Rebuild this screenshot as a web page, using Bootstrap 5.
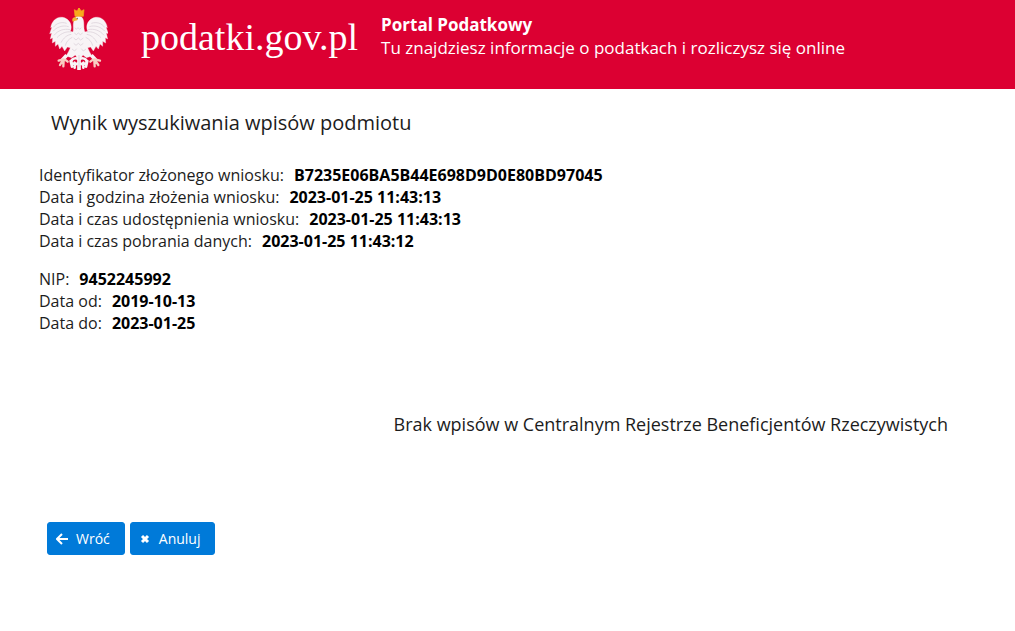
<!DOCTYPE html>
<html lang="pl">
<head>
<meta charset="utf-8">
<meta name="viewport" content="width=device-width, initial-scale=1">
<title>Portal Podatkowy</title>
<link href="https://cdn.jsdelivr.net/npm/bootstrap@5.3.0/dist/css/bootstrap.min.css" rel="stylesheet">
<style>
  body { font-family: "Open Sans", "Noto Sans", sans-serif; color: #1c1c1c; background: #fff; }
  .site-header { background: #dc0032; min-height: 89px; padding: 8px 49px; }
  .site-name { font: 38px/48px "Liberation Serif", serif; margin: 5px 0 0 33px; }
  .site-tagline { font-size: 17px; line-height: 23px; margin: 5px 0 0 23px; }
  .page { padding: 20px 39px; }
  .page-title { font-size: 20px; line-height: 28px; font-weight: 400; margin: 0 12px 27px; }
  .facts { font-size: 16px; line-height: 22px; margin-bottom: 16px; }
  .facts dt { font-weight: 400; }
  .facts dd { font-weight: 700; margin: 0; color: #000; }
  .fact { column-gap: 10px; }
  .empty-note { font-size: 18px; line-height: 26px; margin: 77px 28px 85px; }
  .actions { padding-left: 8px; gap: 5px; }
  .btn-action { --bs-btn-color: #fff; --bs-btn-bg: #007ad9; --bs-btn-border-color: #007ad9;
    --bs-btn-hover-color: #fff; --bs-btn-hover-bg: #116fbf; --bs-btn-hover-border-color: #116fbf;
    --bs-btn-font-size: 14px; --bs-btn-line-height: 21px; --bs-btn-border-radius: 3px;
    --bs-btn-padding-x: 8px; --bs-btn-padding-y: 5px; padding-right: 14px; }
</style>
</head>
<body>
<header class="site-header d-flex align-items-start text-white">
  <svg class="flex-shrink-0" width="59" height="64" viewBox="27 24 177 192" role="img" aria-label="Godło Polski">
    <g fill="#f8f4f6" stroke="#f8f4f6" stroke-linejoin="round">
      <path d="M103 60C97 72 102 86 99 96L91 94C98 80 92 57 68 52C51 49 35 62 32 83L36 81L29 101L35 99L31 117L38 113L37 129L46 124L46 139L54 132L59 147L66 139L74 153L82 141L91 143C88 151 83 160 78 168L95 173L106 165L113 176L117 192L121 176L129 165L139 173L156 168C151 160 146 151 143 143L152 141L160 153L168 139L175 147L180 132L188 139L188 124L197 129L196 113L203 117L199 99L205 101L198 81L202 83C199 62 183 49 166 52C142 57 136 80 143 94L135 96C129 84 134 68 129 57C124 46 110 46 105 54Z"/>
      <path d="M80 166L67 180M154 166L167 180" stroke-width="11"/>
      <path d="M117 160V210" stroke-width="11"/>
      <path d="M115 178C107 171 94 177 94 185C94 192 102 193 104 188M119 178C127 171 140 177 140 185C140 192 132 193 130 188M114 190C107 191 102 196 104 203M120 190C127 191 132 196 130 203M92 183L96 200M142 183L138 200" fill="none" stroke-width="8" stroke-linecap="round"/>
    </g>
    <g fill="none" stroke="#d6ccd4" stroke-width="2">
      <path d="M93 96C80 94 65 98 51 113M90 89C72 85 54 91 42 106M86 80C68 74 49 82 39 94M80 70C65 65 49 69 40 82M94 103C81 105 71 113 63 128M97 112C86 117 79 125 76 137"/>
      <path d="M141 96C154 94 169 98 183 113M144 89C162 85 180 91 192 106M148 80C166 74 185 82 195 94M154 70C169 65 185 69 194 82M140 103C153 105 163 113 171 128M137 112C148 117 155 125 158 137"/>
      <path d="M105 83L109 88L114 83L119 88L124 83M103 99L109 104L115 99L121 104L128 99M101 114L108 120L115 114L122 120L130 114M101 130L108 136L115 130L122 136L130 130M96 147L104 153L110 146M138 147L130 153L124 146M117 165V202"/>
    </g>
    <g stroke="#f8cdc2" fill="none" stroke-width="7" stroke-linecap="round">
      <path d="M70 178L56 182M68 182L60 195M71 183L70 199M75 179L83 185M164 178L180 182M166 182L175 195M163 183L164 199M159 179L151 185"/>
    </g>
    <path d="M103 29L111 33L117 24L124 33L132 29L130 49H105Z" fill="#f8a91c" stroke="#f8a91c" stroke-width="2" stroke-linejoin="round"/>
    <path d="M107 51C98 52 94 58 99 66C102 61 108 63 114 59Z" fill="#efb83a"/>
    <circle cx="112" cy="55" r="2" fill="#76515d"/>
    <circle cx="117" cy="27" r="3" fill="#f8a91c"/>
  </svg>
  <div class="site-name">podatki.gov.pl</div>
  <div class="site-tagline"><strong>Portal Podatkowy</strong><br>Tu znajdziesz informacje o podatkach i rozliczysz się online</div>
</header>

<main class="page">
  <h1 class="page-title">Wynik wyszukiwania wpisów podmiotu</h1>
  <dl class="facts">
    <div class="fact d-flex flex-wrap"><dt>Identyfikator złożonego wniosku:</dt><dd>B7235E06BA5B44E698D9D0E80BD97045</dd></div>
    <div class="fact d-flex flex-wrap"><dt>Data i godzina złożenia wniosku:</dt><dd>2023-01-25 11:43:13</dd></div>
    <div class="fact d-flex flex-wrap"><dt>Data i czas udostępnienia wniosku:</dt><dd>2023-01-25 11:43:13</dd></div>
    <div class="fact d-flex flex-wrap"><dt>Data i czas pobrania danych:</dt><dd>2023-01-25 11:43:12</dd></div>
  </dl>
  <dl class="facts">
    <div class="fact d-flex flex-wrap"><dt>NIP:</dt><dd>9452245992</dd></div>
    <div class="fact d-flex flex-wrap"><dt>Data od:</dt><dd>2019-10-13</dd></div>
    <div class="fact d-flex flex-wrap"><dt>Data do:</dt><dd>2023-01-25</dd></div>
  </dl>
  <p class="empty-note text-end">Brak wpisów w Centralnym Rejestrze Beneficjentów Rzeczywistych</p>
  <div class="actions d-flex flex-wrap">
    <button type="button" class="btn btn-action d-inline-flex align-items-center gap-2">
      <svg width="12" height="12" viewBox="0 0 12 12" fill="none" stroke="currentColor" stroke-width="2" aria-hidden="true"><path d="M6 1L1 6L6 11M1 6H12"/></svg>
      Wróć
    </button>
    <button type="button" class="btn btn-action d-inline-flex align-items-center gap-2">
      <svg width="12" height="12" viewBox="0 0 12 12" fill="none" stroke="currentColor" stroke-width="3" aria-hidden="true"><path d="M3 3L9 9M9 3L3 9"/></svg>
      Anuluj
    </button>
  </div>
</main>
<script src="https://cdn.jsdelivr.net/npm/bootstrap@5.3.0/dist/js/bootstrap.bundle.min.js"></script>
</body>
</html>
